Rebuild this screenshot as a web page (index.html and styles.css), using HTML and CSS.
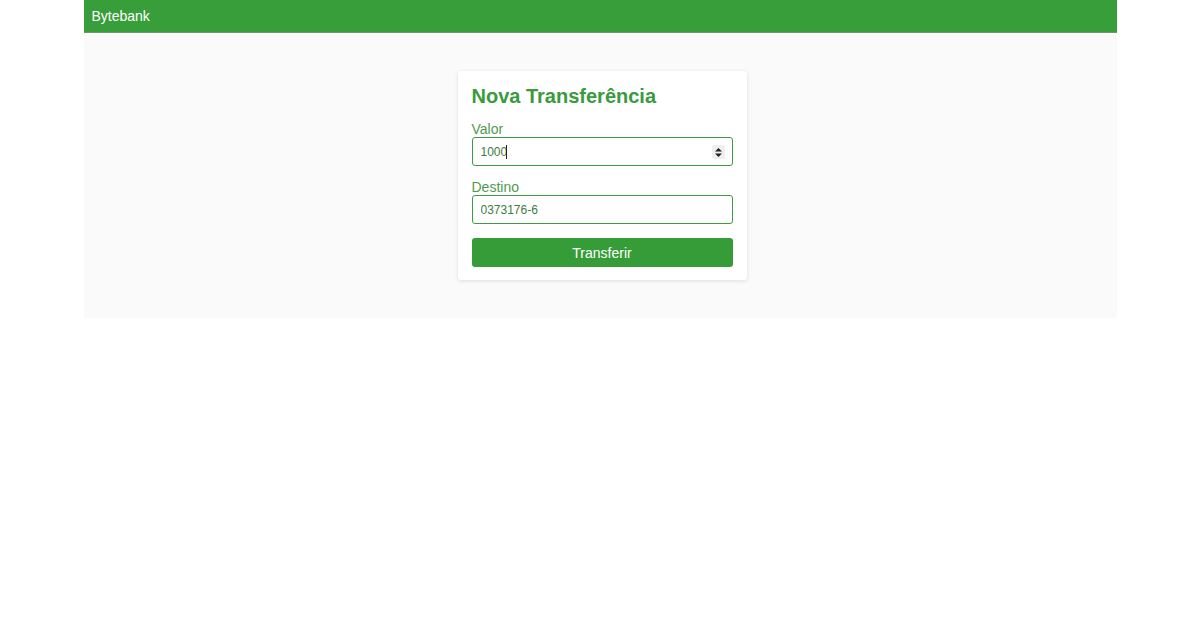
FILE: index.html
```html
<!DOCTYPE html>
<html lang="pt">
<head>
<meta charset="utf-8">
<title>Bytebank</title>
<link rel="stylesheet" href="styles.css">
</head>
<body>
<div class="app">
  <header class="topbar">Bytebank</header>
  <main class="content">
    <form class="card">
      <h1 class="card-title">Nova Transferência</h1>
      <label class="field-label" for="valor">Valor</label>
      <div class="input-wrap">
        <input class="field-input" id="valor" type="number" value="1000">
        <span class="caret"></span>
        <span class="spinner">
          <svg width="9" height="11" viewBox="0 0 9 11"><path d="M4.5 1 L8 4.5 H1 Z" fill="#222"/><path d="M4.5 10 L8 6.5 H1 Z" fill="#222"/></svg>
        </span>
      </div>
      <label class="field-label" for="destino">Destino</label>
      <div class="input-wrap">
        <input class="field-input" id="destino" type="text" value="0373176-6">
      </div>
      <button class="btn" type="button">Transferir</button>
    </form>
  </main>
</div>
</body>
</html>
```
FILE: styles.css
```css
html, body {
  margin: 0;
  padding: 0;
  background: #ffffff;
  font-family: "Liberation Sans", Arial, sans-serif;
}
.app {
  width: 1033px;
  margin: 0 auto;
}
.topbar {
  background: #379e3a;
  color: #ffffff;
  font-size: 14px;
  line-height: 32px;
  padding: 0 8px;
  border-bottom: 1px solid #6a9a6c;
  box-sizing: border-box;
  height: 33px;
}
.content {
  background: #fafafa;
  padding: 38px 0 38px 4px;
  display: flex;
  justify-content: center;
}
.card {
  width: 289px;
  box-sizing: border-box;
  background: #ffffff;
  padding: 14px 14px 13px;
  border-radius: 3px;
  box-shadow: 0 1px 4px rgba(0,0,0,0.12);
  display: flex;
  flex-direction: column;
}
.card-title {
  margin: 0 0 13px;
  font-size: 20px;
  font-weight: bold;
  color: #3a9a3e;
  line-height: 23px;
}
.field-label {
  font-size: 14px;
  line-height: 16px;
  color: #4f9a52;
}
.input-wrap {
  position: relative;
  display: flex;
  flex-direction: column;
  margin: 0 0 13px;
}
.field-input {
  height: 29px;
  box-sizing: border-box;
  border: 1px solid #3f9a43;
  border-radius: 3px;
  padding: 0 8px;
  font-family: "Liberation Sans", Arial, sans-serif;
  font-size: 12px;
  color: #3d7d40;
  margin: 0;
  background: #fff;
  outline: none;
  -moz-appearance: textfield;
}
.field-input::-webkit-outer-spin-button,
.field-input::-webkit-inner-spin-button {
  -webkit-appearance: none;
  margin: 0;
}
.caret {
  position: absolute;
  left: 34px;
  top: 8px;
  width: 1px;
  height: 14px;
  background: #222;
}
.spinner {
  position: absolute;
  right: 8px;
  top: 8px;
  width: 13px;
  height: 14px;
  background: #efefef;
  border-radius: 2px;
  display: flex;
  align-items: center;
  justify-content: center;
}
.btn {
  margin-top: 1px;
  height: 29px;
  border: none;
  border-radius: 3px;
  background: #369c38;
  color: #ffffff;
  font-family: "Liberation Sans", Arial, sans-serif;
  font-size: 14px;
  cursor: pointer;
}
```
